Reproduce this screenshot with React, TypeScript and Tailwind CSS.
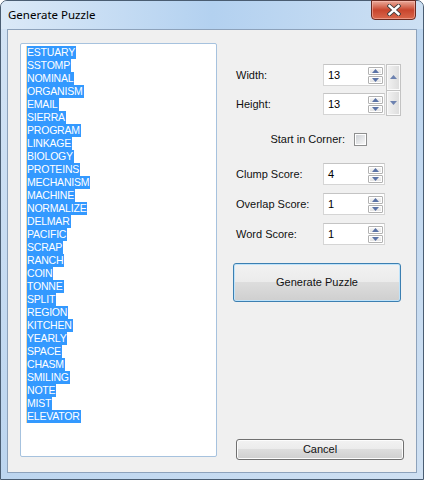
import React from "react";

const WORDS = [
  "ESTUARY","SSTOMP","NOMINAL","ORGANISM","EMAIL","SIERRA","PROGRAM","LINKAGE","BIOLOGY","PROTEINS",
  "MECHANISM","MACHINE","NORMALIZE","DELMAR","PACIFIC","SCRAP","RANCH","COIN","TONNE","SPLIT",
  "REGION","KITCHEN","YEARLY","SPACE","CHASM","SMILING","NOTE","MIST","ELEVATOR",
];

function Arrow({ up, color = "#5a72a6" }: { up: boolean; color?: string }) {
  return (
    <svg width="7" height="4" viewBox="0 0 7 4">
      {up ? <polygon points="0,4 7,4 3.5,0" fill={color} /> : <polygon points="0,0 7,0 3.5,4" fill={color} />}
    </svg>
  );
}

function SpinBtn({ up }: { up: boolean }) {
  return (
    <div className="w-[15px] h-[8px] border border-[#b2b2b2] rounded-[1px] bg-gradient-to-b from-[#fafafa] to-[#dedede] flex items-center justify-center shadow-[inset_0_0_0_1px_#ffffff]">
      <Arrow up={up} />
    </div>
  );
}

function Spinner({ value }: { value: string }) {
  return (
    <div className="w-[62px] h-[22px] bg-white border border-[#d5d5d5] border-t-[#c4c4c4] flex items-center">
      <span className="flex-1 pl-[4px] text-[11px] leading-none text-black">{value}</span>
      <div className="flex flex-col gap-[1px] mr-[1px]">
        <SpinBtn up />
        <SpinBtn up={false} />
      </div>
    </div>
  );
}

function Row({ label, value }: { label: string; value: string }) {
  return (
    <div className="flex items-center h-[22px]">
      <span className="w-[90px] pl-[3px] text-[11px] text-[#111]">{label}</span>
      <Spinner value={value} />
    </div>
  );
}

export default function App() {
  return (
    <div className="w-[424px] h-[480px] bg-white" style={{ fontFamily: '"Liberation Sans", Arial, sans-serif' }}>
      <div className="w-full h-full flex flex-col rounded-t-[7px] border border-[#4a5d72] bg-gradient-to-br from-[#d4e4f5] via-[#bcd5ef] to-[#cfe0f2]">
        {/* title bar */}
        <div className="h-[28px] flex justify-between pl-[7px] pr-[7px] bg-gradient-to-r from-[#dbe9f7] via-[#b3d1f0] to-[#cde0f3] rounded-t-[6px]">
          <span className="self-center text-[11.5px] text-black pb-[1px]" style={{ fontFamily: '"Noto Sans", "Liberation Sans", sans-serif' }}>Generate Puzzle</span>
          <div className="-mt-px w-[45px] h-[20px] rounded-b-[4px] border border-[#6a2a20] bg-gradient-to-b from-[#e9a99a] via-[#c8452d] to-[#d9674b] flex items-center justify-center shadow-[inset_0_0_0_1px_rgba(255,200,190,0.5)]">
            <svg width="14" height="12" viewBox="0 0 14 12">
              <path d="M2.5 2 L11.5 10 M11.5 2 L2.5 10" stroke="#3b3b3b" strokeWidth="4.2" strokeLinecap="square" />
              <path d="M2.5 2 L11.5 10 M11.5 2 L2.5 10" stroke="#ffffff" strokeWidth="2.4" strokeLinecap="square" />
            </svg>
          </div>
        </div>
        {/* client */}
        <div className="flex-1 mx-[6px] mb-[6px] border border-[#8da2bb] bg-[#f0f0f0] flex">
          {/* listbox */}
          <div className="ml-[12px] mt-[13px] mb-[15px] w-[197px] bg-white border border-[#a6c2de] rounded-[2px] pt-[2px] pl-[5px]">
            {WORDS.map((w) => (
              <div key={w} className="h-[13px] flex">
                <span className="h-[13px] leading-[13px] bg-[#3399ff] text-white text-[10.5px] tracking-[-0.2px] pr-[1px] border-l border-[#f3d8b0]">{w}</span>
              </div>
            ))}
          </div>
          {/* right column */}
          <div className="ml-[16px] w-[171px] pt-[34px] pb-[12px] flex flex-col">
            <div className="flex">
              <div className="flex flex-col gap-[7px] w-[153px]">
                <Row label="Width:" value="13" />
                <Row label="Height:" value="13" />
              </div>
              <div className="w-[15px] h-[52px] border border-[#c3c3c3] flex flex-col">
                <div className="flex-1 border-b border-[#c3c3c3] bg-gradient-to-r from-[#f2f2f2] to-[#dcdcdc] flex items-center justify-center shadow-[inset_0_0_0_1px_#fafafa]">
                  <Arrow up color="#6d82b0" />
                </div>
                <div className="flex-1 bg-gradient-to-r from-[#f2f2f2] to-[#dcdcdc] flex items-center justify-center shadow-[inset_0_0_0_1px_#fafafa]">
                  <Arrow up={false} color="#6d82b0" />
                </div>
              </div>
            </div>
            <div className="mt-[17px] w-[134px] h-[13px] flex items-center justify-end gap-[9px]">
              <span className="text-[11px] text-[#111]">Start in Corner:</span>
              <div className="w-[13px] h-[13px] border border-[#8e8f8f] bg-white p-[1px]">
                <div className="w-full h-full bg-gradient-to-br from-[#cfd2d6] to-[#f7f7f7]" />
              </div>
            </div>
            <div className="mt-[17px] flex flex-col gap-[8px]">
              <Row label="Clump Score:" value="4" />
              <Row label="Overlap Score:" value="1" />
              <Row label="Word Score:" value="1" />
            </div>
            <button className="mt-[18px] w-[168px] h-[39px] rounded-[3px] border border-[#3c7fb1] shadow-[inset_0_0_0_1px_#bfe3fa] bg-[linear-gradient(to_bottom,#f2f2f2_0%,#ebebeb_50%,#dddddd_50%,#cfcfcf_100%)] text-[11px] text-[#111]">
              Generate Puzzle
            </button>
            <button className="mt-auto ml-[3px] w-[168px] h-[21px] rounded-[3px] border border-[#707070] shadow-[inset_0_0_0_1px_#fcfcfc] bg-[linear-gradient(to_bottom,#f2f2f2_0%,#ebebeb_50%,#dddddd_50%,#cfcfcf_100%)] text-[11px] text-[#111]">
              Cancel
            </button>
          </div>
        </div>
      </div>
    </div>
  );
}
